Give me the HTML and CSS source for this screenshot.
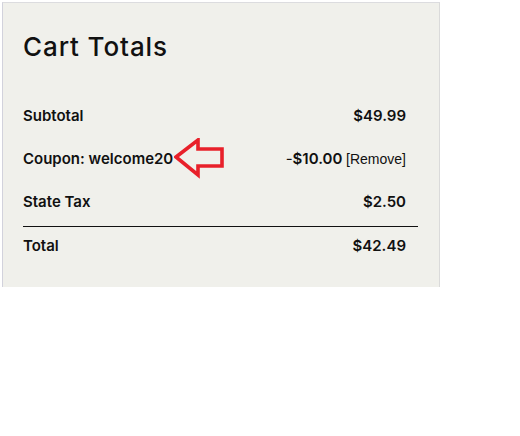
FILE: index.html
```html
<!DOCTYPE html>
<html>
<head>
<meta charset="utf-8">
<link rel="stylesheet" href="styles.css">
</head>
<body>
<div class="panel">
  <h2 class="title">Cart Totals</h2>
  <table class="totals">
    <tr class="row">
      <th class="label">Subtotal</th>
      <td class="value">$49.99</td>
    </tr>
    <tr class="row">
      <th class="label">Coupon: welcome20<svg class="arrow" width="52" height="42" viewBox="0 0 52 42"><path d="M2 19 L24 2 L24 11 L48 11 L48 28 L24 28 L24 37 Z" fill="none" stroke="#e8202a" stroke-width="3.6" stroke-linejoin="miter"/></svg></th>
      <td class="value"><span class="minus">-</span>$10.00 <a class="remove">[Remove]</a></td>
    </tr>
    <tr class="row tax">
      <th class="label">State Tax</th>
      <td class="value">$2.50</td>
    </tr>
    <tr class="row total">
      <th class="label">Total</th>
      <td class="value">$42.49</td>
    </tr>
  </table>
</div>
</body>
</html>
```

FILE: styles.css
```css
html, body {
  margin: 0;
  padding: 0;
  background: #ffffff;
}
body {
  font-family: "Inter", "Liberation Sans", sans-serif;
  color: #111111;
}
.panel {
  margin: 2px 0 0 2px;
  width: 438px;
  height: 285px;
  background: #f0f0eb;
  border-left: 1px solid #d2d2dc;
  border-top: 1px solid #dcdcdf;
  border-right: 1px solid #dadada;
  padding: 0 0 0 20px;
  box-sizing: border-box;
}
.title {
  margin: 0;
  padding-top: 29px;
  font-size: 26px;
  font-weight: 500;
  line-height: 30px;
  letter-spacing: 0.9px;
}
.totals {
  margin-top: 32px;
  width: 395px;
  border-collapse: collapse;
}
.row td, .row th {
  height: 43px;
  padding: 0;
  vertical-align: middle;
  font-size: 15px;
  font-weight: 600;
}
.row.tax td, .row.tax th {
  padding-bottom: 3px;
}
.row.total td, .row.total th {
  height: 39px;
  vertical-align: top;
  padding-top: 9px;
}
.label {
  text-align: left;
  position: relative;
}
.value {
  text-align: right;
  padding-right: 12px !important;
}
.minus {
  font-weight: 400;
}
.remove {
  font-family: "Liberation Sans", Arial, sans-serif;
  font-weight: 400;
  font-size: 14px;
  color: #111;
}
.arrow {
  position: absolute;
  left: 151px;
  top: 1px;
}
.total td, .total th {
  border-top: 1px solid #111;
}
```
